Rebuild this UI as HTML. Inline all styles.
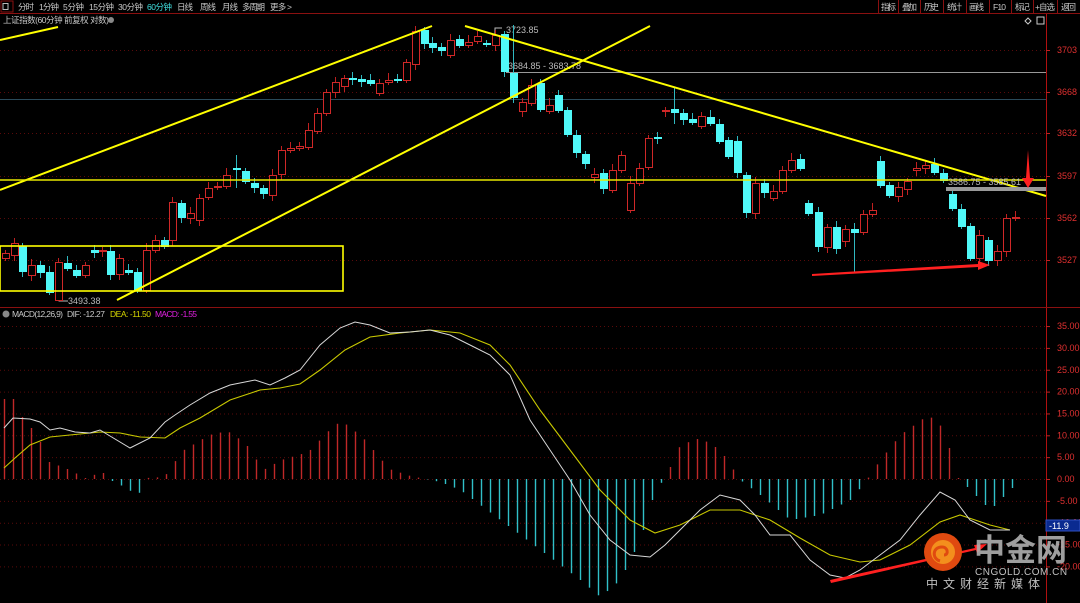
<!DOCTYPE html>
<html><head><meta charset="utf-8"><style>
html,body{margin:0;padding:0;background:#000;width:1080px;height:603px;overflow:hidden;font-family:"Liberation Sans","Noto Sans CJK SC",sans-serif}
svg{display:block}
</style></head><body>
<svg id="s" width="1080" height="603" xmlns="http://www.w3.org/2000/svg" font-family="Liberation Sans, Noto Sans CJK SC, sans-serif">
<rect width="1080" height="603" fill="#000"/>
<line x1="0" y1="13.5" x2="1080" y2="13.5" stroke="#8a1010"/>
<rect x="1" y="1" width="12" height="11" fill="none" stroke="#8a1010"/>
<rect x="3" y="3.5" width="5" height="6" fill="none" stroke="#bbb"/>
<g font-size="8.5" fill="#c8c8c8" lengthAdjust="spacingAndGlyphs">
<text x="18" y="10" textLength="16">分时</text><text x="39" y="10" textLength="20">1分钟</text><text x="63" y="10" textLength="21">5分钟</text><text x="89" y="10" textLength="25">15分钟</text><text x="118" y="10" textLength="25">30分钟</text><text x="147" y="10" textLength="25" fill="#40e0e0">60分钟</text><text x="177" y="10" textLength="16">日线</text><text x="200" y="10" textLength="16">周线</text><text x="222" y="10" textLength="16">月线</text><text x="242" y="10" textLength="23">多周期</text><text x="270" y="10" textLength="22">更多 &gt;</text>
<text x="3" y="23" textLength="106">上证指数(60分钟 前复权 对数)</text>
<text x="881" y="10" textLength="15">指标</text><text x="902" y="10" textLength="15">叠加</text><text x="924" y="10" textLength="15">历史</text><text x="947" y="10" textLength="15">统计</text><text x="969" y="10" textLength="15">画线</text><text x="993" y="10" textLength="13">F10</text><text x="1015" y="10" textLength="15">标记</text><text x="1035" y="10" textLength="20">+自选</text><text x="1061" y="10" textLength="15">返回</text>
</g>
<circle cx="111" cy="20" r="3" fill="#888"/>
<g stroke="#8a1010"><line x1="878.5" y1="0" x2="878.5" y2="13"/><line x1="898.5" y1="0" x2="898.5" y2="13"/><line x1="920.5" y1="0" x2="920.5" y2="13"/><line x1="943.5" y1="0" x2="943.5" y2="13"/><line x1="966.5" y1="0" x2="966.5" y2="13"/><line x1="989.5" y1="0" x2="989.5" y2="13"/><line x1="1011.5" y1="0" x2="1011.5" y2="13"/><line x1="1033.5" y1="0" x2="1033.5" y2="13"/><line x1="1057.5" y1="0" x2="1057.5" y2="13"/></g>
<path d="M1028 18 l3 3 -3 3 -3 -3z" fill="none" stroke="#ccc"/>
<rect x="1037" y="17" width="7" height="7" fill="none" stroke="#ccc"/>
<line x1="1046.5" y1="14" x2="1046.5" y2="603" stroke="#b01010"/>
<line x1="0" y1="307.5" x2="1080" y2="307.5" stroke="#8a1010"/>
<g id="grid"></g>
<g font-size="9" fill="#e03030" id="lab"></g>
<line x1="0" y1="99.5" x2="1046" y2="99.5" stroke="#2a4a5a"/>
<line x1="506" y1="72.5" x2="1046" y2="72.5" stroke="#999"/>
<text x="508" y="69" font-size="9" fill="#bbb">3684.85 - 3683.78</text>
<text x="506" y="33" font-size="9" fill="#bbb">3723.85</text>
<path d="M495 34 v-6 h7" stroke="#bbb" fill="none"/>
<text x="68" y="304" font-size="9" fill="#bbb">3493.38</text>
<path d="M56 298 l3 3 h9" stroke="#bbb" fill="none"/>
<g id="candles"></g>
<g stroke="#ffff00" stroke-width="2" fill="none">
<line x1="0" y1="40" x2="58" y2="27"/>
<line x1="0" y1="190" x2="432" y2="26"/>
<line x1="117" y1="300" x2="650" y2="26"/>
<line x1="465" y1="26" x2="1046" y2="196"/>
<rect x="0" y="246" width="343" height="45" stroke-width="1.6"/>
</g>
<line x1="0" y1="180" x2="1046" y2="180" stroke="#e8e800" stroke-width="1.5"/>
<rect x="946" y="187" width="100" height="4" fill="#999"/>
<text x="948" y="185" font-size="9" fill="#bbb">3586.75 - 3585.61</text>
<path d="M812 274 L978 264 L978 261 L990 265 L978 270 L978 267 L812 276Z" fill="#ff2020"/>
<path d="M1028 150 L1030 178 L1034 178 L1028 188 L1022 178 L1026 178Z" fill="#ff2020"/>
<circle cx="6" cy="314" r="3.5" fill="#888"/>
<g font-size="8.5" lengthAdjust="spacingAndGlyphs">
<text x="12" y="317" fill="#c8c8c8" textLength="51">MACD(12,26,9)</text>
<text x="67" y="317" fill="#c8c8c8" textLength="38">DIF: -12.27</text>
<text x="110" y="317" fill="#d8d800" textLength="41">DEA: -11.50</text>
<text x="155" y="317" fill="#e020e0" textLength="42">MACD: -1.55</text>
</g>
<g id="hist"></g>
<polyline id="dea" fill="none" stroke="#c8c800" stroke-width="1.1"/>
<polyline id="dif" fill="none" stroke="#d8d8d8" stroke-width="1"/>
<path d="M830 580 L975 548 L974 545 L987 544 L977 553 L976 550 L831 583Z" fill="#ff2020"/>
<rect x="1046" y="520" width="34" height="11" fill="#0a2a90" stroke="#3050c0"/>
<text x="1049" y="529" font-size="9" fill="#fff">-11.9</text>
<circle cx="943" cy="552" r="19" fill="#e04a10"/>
<circle cx="943" cy="552" r="12" fill="#f8a020" opacity="0.8"/>
<path d="M940 561 c-8 -2 -8 -14 2 -14 c6 0 7 8 2 8" stroke="#e04a10" stroke-width="3" fill="none"/>
<text x="974" y="561" font-size="31" font-weight="bold" fill="#b0b0b0" opacity="0.9">中金网</text>
<text x="975" y="575" font-size="10" fill="#c0c0c0" letter-spacing="0.5">CNGOLD.COM.CN</text>
<text x="926" y="588" font-size="12" fill="#c0c0c0" letter-spacing="5">中文财经新媒体</text>
</svg>
<script>
var NS="http://www.w3.org/2000/svg";
function el(p,t,a){var e=document.createElementNS(NS,t);for(var k in a)e.setAttribute(k,a[k]);p.appendChild(e);return e;}
var g=document.getElementById('grid'),lab=document.getElementById('lab');
[[50,"3703"],[92,"3668"],[133,"3632"],[176,"3597"],[218,"3562"],[260,"3527"]].forEach(function(r){
 el(g,'line',{x1:0,y1:r[0]+.5,x2:1046,y2:r[0]+.5,stroke:"#5a0a0a","stroke-dasharray":"1,3"});
 el(g,'line',{x1:1046,y1:r[0]+.5,x2:1050,y2:r[0]+.5,stroke:"#c02020"});
 var t=el(lab,'text',{x:1057,y:r[0]+3});t.textContent=r[1];});
var mv=[35,30,25,20,15,10,5,0,-5,-10,-15,-20];
mv.forEach(function(v){var y=479-v*4.37;
 el(g,'line',{x1:0,y1:y+.5,x2:1046,y2:y+.5,stroke:"#5a0a0a","stroke-dasharray":"1,3"});
 el(g,'line',{x1:1046,y1:y+.5,x2:1050,y2:y+.5,stroke:"#c02020"});
 var t=el(lab,'text',{x:1057,y:y+3});t.textContent=v.toFixed(2);});
var C=[[5,253,258,1],[14,243,255,1],[22,246,271,0],[31,265,275,1],[40,265,272,0],[49,272,292,0],[58,262,300,1],[67,263,268,0],[76,270,275,0],[85,265,275,1],[94,250,252,0],[102,250,251,1],[110,251,274,0],[119,258,274,1],[128,270,272,0],[137,272,290,0],[146,250,290,1],[155,240,250,1],[164,240,246,0],[172,202,240,1],[181,203,217,0],[190,213,218,1],[199,198,220,1],[208,188,197,1],[217,186,187,1],[226,175,186,1],[236,168,169,0],[245,171,181,0],[254,183,187,0],[263,188,193,0],[272,175,195,1],[281,150,174,1],[290,148,150,1],[299,146,148,1],[308,130,147,1],[317,113,131,1],[326,92,113,1],[335,82,92,1],[344,78,86,1],[352,78,79,0],[361,79,81,0],[370,80,83,0],[379,83,93,1],[388,80,82,1],[397,79,80,0],[406,62,80,1],[415,31,64,1],[424,30,43,0],[432,43,47,0],[441,47,50,0],[450,40,55,1],[459,39,45,0],[468,42,45,1],[477,36,41,1],[486,43,44,0],[495,35,45,1],[504,34,71,0],[513,73,97,0],[522,102,111,1],[531,85,103,1],[540,83,109,0],[549,105,111,1],[558,95,110,0],[567,110,134,0],[576,135,152,0],[585,154,163,0],[594,174,177,1],[603,173,188,0],[612,170,190,1],[621,155,170,1],[630,183,210,1],[639,168,183,1],[648,138,167,1],[657,137,138,0],[665,110,111,1],[674,109,112,0],[683,113,119,0],[692,119,122,0],[701,116,126,1],[710,117,123,0],[719,124,141,0],[728,140,156,0],[737,141,172,0],[746,175,212,0],[755,183,213,1],[764,183,192,0],[773,191,198,1],[782,170,191,1],[791,160,170,1],[800,159,168,0],[808,203,213,0],[818,212,246,0],[827,227,247,1],[836,227,248,0],[845,229,241,1],[854,229,232,0],[863,214,232,1],[872,210,214,1],[880,161,185,0],[889,185,195,0],[898,187,196,1],[907,181,189,1],[916,168,170,1],[925,165,168,1],[934,164,172,0],[943,173,180,0],[952,194,208,0],[961,209,226,0],[970,226,258,0],[979,235,258,1],[988,240,260,0],[997,251,260,1],[1006,218,251,1],[1015,217,218,1]];
var cg=document.getElementById('candles');
C.forEach(function(c,i){var x=c[0],t=c[1],b=c[2],up=c[3];
 var h=Math.max(1,b-t),w=(i*7)%9;var hi=t-3-(w%5),lo=b+3+((w*3)%6);
 if(i==57)hi=25;if(i==6)lo=298;if(i==26){hi=155;lo=188;}if(i==75){hi=88;lo=124;}if(i==95){lo=272;}
 var col=up?"#d02828":"#50f8f8";
 el(cg,'line',{x1:x+.5,y1:hi,x2:x+.5,y2:lo,stroke:up?"#c02020":"#30b8c0"});
 if(up) el(cg,'rect',{x:x-3+.5,y:t+.5,width:7,height:h,fill:"#000",stroke:col});
 else el(cg,'rect',{x:x-3,y:t,width:8,height:h+1,fill:col});
});
var K=[[4,399],[13,399],[22,417],[31,428],[40,442],[49,462],[67,469],[85,478],[102,472],[110,480],[128,489],[137,497],[146,478],[164,477],[182,451],[209,435],[227,431],[245,443],[263,470],[281,460],[308,452],[335,424],[344,423],[362,437],[389,469],[410,476],[440,482],[460,490],[500,520],[540,550],[580,580],[600,597],[620,580],[640,540],[655,490],[665,478],[680,445],[700,438],[720,450],[740,480],[760,495],[790,520],[820,515],[850,500],[865,482],[880,460],[900,435],[928,415],[945,430],[955,475],[970,490],[990,510],[1005,495],[1015,485]];
function interp(x){for(var i=0;i<K.length-1;i++){if(x>=K[i][0]&&x<=K[i+1][0]){var f=(x-K[i][0])/(K[i+1][0]-K[i][0]);return K[i][1]+f*(K[i+1][1]-K[i][1]);}}return 479;}
var hg=document.getElementById('hist');
for(var x=4;x<=1015;x+=9){var y=interp(x);
 if(y<479) el(hg,'line',{x1:x+.5,y1:y,x2:x+.5,y2:479,stroke:"#c02828","stroke-width":1.4});
 else el(hg,'line',{x1:x+.5,y1:479,x2:x+.5,y2:y,stroke:"#30c0c8","stroke-width":1.4});}
document.getElementById('dif').setAttribute('points',"4,428 13,418 30,419 40,422 50,430 60,428 75,432 90,433 100,430 110,436 130,448 150,438 165,422 175,415 190,405 210,393 230,385 255,380 270,385 285,378 300,370 320,345 340,328 355,322 370,325 390,333 410,332 430,330 450,335 470,345 490,355 510,375 530,420 550,450 570,480 590,515 610,540 630,555 650,557 665,545 680,530 700,510 720,495 740,500 755,515 770,535 790,535 810,560 830,575 845,578 860,570 880,555 900,540 920,515 940,492 955,500 970,520 990,530 1010,530");
document.getElementById('dea').setAttribute('points',"4,468 15,458 30,445 50,437 80,434 100,432 120,433 140,437 165,438 180,428 200,418 230,400 260,390 280,388 300,384 320,370 345,350 370,337 400,333 430,330 460,333 490,345 510,365 540,410 570,450 600,490 630,520 655,533 680,525 710,510 740,510 770,520 800,538 830,555 860,562 880,560 910,545 940,522 960,515 990,525 1010,530");
</script>
</body></html>
